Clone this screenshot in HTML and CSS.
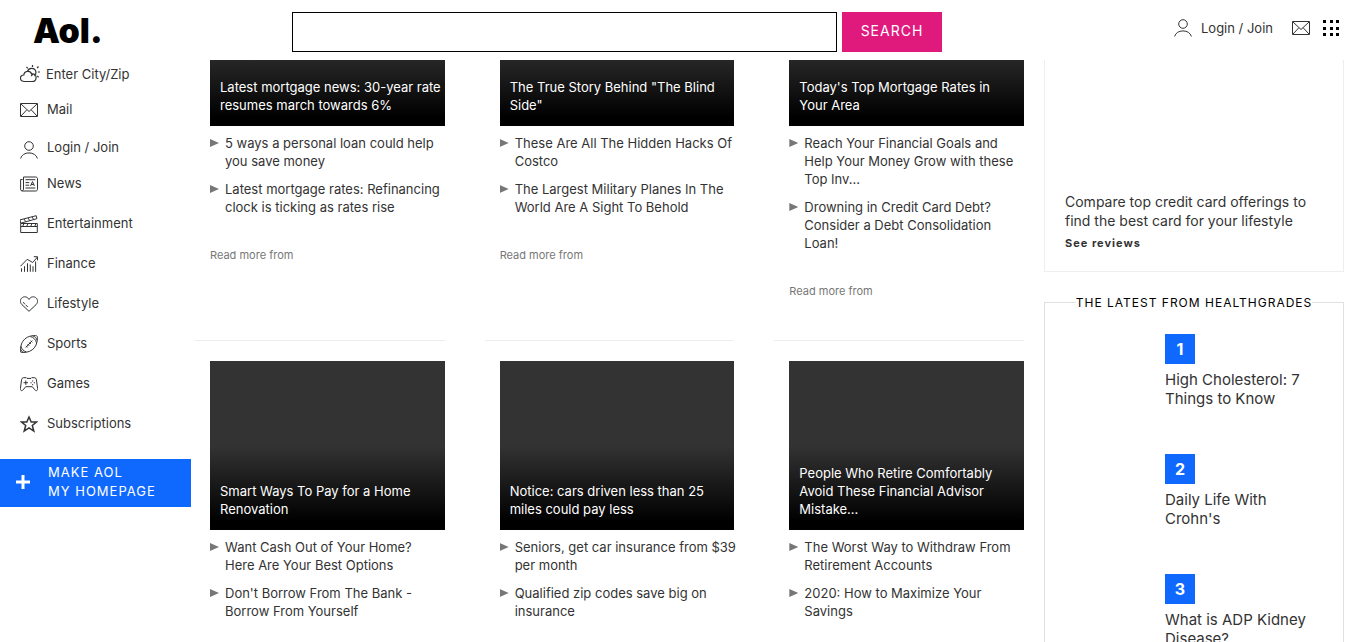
FILE: index.html
```html
<!DOCTYPE html>
<html lang="en">
<head>
<meta charset="utf-8">
<meta name="viewport" content="width=device-width, initial-scale=1">
<title>Aol.</title>
<link rel="stylesheet" href="styles.css">
</head>
<body>
<svg class="sprite" aria-hidden="true">
  <symbol id="mail" viewBox="0 0 18 18"><path d="M.5 2.500h17v13H.500zM1 3l8 7.500L17 3M1 15l5.800-6.200M17 15l-5.800-6.200"/></symbol>
  <symbol id="user" viewBox="0 0 18 18"><circle cx="9" cy="5" r="4.3"/><path d="M.6 17.5c1-3.600 4.300-5.600 8.400-5.600s7.400 2 8.400 5.600"/></symbol>
</svg>
<header class="top">
  <a class="logo" href="#">Aol.</a>
  <form class="search">
    <input class="search-box" type="text" aria-label="Search the web">
    <button class="search-button" type="button">SEARCH</button>
  </form>
  <div class="account">
    <a class="account-login" href="#"><svg class="icon"><use href="#user"/></svg>Login / Join</a>
    <a class="account-mail" href="#" aria-label="Mail"><svg class="icon"><use href="#mail"/></svg></a>
    <button class="apps" type="button" aria-label="More sites"><svg class="icon" viewBox="0 0 18 18"><path class="solid" d="M1 1h3v3H1zM8 1h3v3H8zM14 1h3v3h-3zM1 8h3v3H1zM8 8h3v3H8zM14 8h3v3h-3zM1 14h3v3H1zM8 14h3v3H8zM14 14h3v3h-3z"/></svg></button>
  </div>
</header>
<div class="page">
  <nav class="side">
    <a class="side-link side-weather" href="#"><svg class="icon icon-weather" viewBox="0 0 20 18"><path d="M4.500 16.500c-5.300 0-5.300-6.500-.7-6.500C4.200 5.500 10.500 5 11.600 9c3.200-.3 4.900 1.500 4.400 4.300-.3 2-1.600 3.200-3.700 3.200zM7.500 6.500c1.200-4.200 7.500-4 8.300.2.300 2-.3 3.500-1.500 4.300M12.800 9.200l-1.600 1.900M12.500 0v2M6.500 2l1.300 1.400M18.500 1.500l-1.400 1.500M17.800 7H20M17.300 11l1.300 1.200"/></svg>Enter City/Zip</a>
    <a class="side-link side-mail" href="#"><svg class="icon"><use href="#mail"/></svg>Mail</a>
    <a class="side-link side-login" href="#"><svg class="icon"><use href="#user"/></svg>Login / Join</a>
    <a class="side-link" href="#"><svg class="icon" viewBox="0 0 18 18"><path d="M3.500 2h12c1.200 0 2 .7 2 1.700v10.600c0 1.100-.7 1.700-1.800 1.700H2.500C1.300 16 .6 15.300.6 14V4.500h2M3.500 2v12c0 1.400-1 2-2 1.500M5.500 4.700h9.800M5.500 7.600h3.700M5.500 10.200h3.700M5.500 13h9.800M10.600 10.900l1.900-4.300 1.900 4.300M11.200 9.500h2.500"/></svg>News</a>
    <a class="side-link" href="#"><svg class="icon" viewBox="0 0 18 18"><path d="M.7 8.500h16.600v9H.7zM.7 11.500h16.600M.7 8.200L0 4.900 16.200.7l.7 3zM4 4l1.700 2.700M8 2.900l1.700 2.700M12 1.900l1.700 2.700M4 8.500l-1.400 3M8 8.500l-1.400 3M12 8.500l-1.400 3M16 8.500l-1.400 3"/></svg>Entertainment</a>
    <a class="side-link" href="#"><svg class="icon" viewBox="0 0 18 18"><path d="M.4 11.300l6.800-7 5.500 3.200 4.700-5.400M13.800 1.700h3.700v3.600M1.500 16.800v-3.500M4.500 16.800v-5.600M7.500 16.800V8.300M10.300 16.800V9.500M13 16.800v-5.600M15.600 16.800V6.500"/></svg>Finance</a>
    <a class="side-link" href="#"><svg class="icon" viewBox="0 0 18 18"><path d="M9 16.300L2 9.700C-.6 7.100.3 3.700 2.600 2.400 5 1.100 7.700 2 9 4.500c1.300-2.500 4-3.400 6.400-2.100 2.300 1.300 3.200 4.700.6 7.300zM3.200 7.200l1.600 2M5.600 9.800l2.200 2.200"/></svg>Lifestyle</a>
    <a class="side-link" href="#"><svg class="icon" viewBox="0 0 18 18"><path d="M.8 17.200C-.3 10.500 2.500.4 15.500.6c1.300 0 1.900.5 1.900 1.800C17.700 14.700 8.500 18.500.8 17.200zM10.500 1.600c3 .7 5.100 2.800 5.900 6M13 .9c2 .7 3.400 2.200 4.200 4.300M.9 11.200c.6 2.800 2.700 4.900 5.500 5.700M.5 14c.6 1.700 1.800 2.800 3.200 3.300M5.800 12.500l6.500-7M6 10.800l1.600 1.600M7.600 9.100l1.600 1.600M9.200 7.400l1.600 1.600M10.700 5.700l1.600 1.600"/></svg>Sports</a>
    <a class="side-link" href="#"><svg class="icon" viewBox="0 0 18 18"><path d="M3.300 2.700h3l.7.700h4l.7-.7h3c1 .2 1.500.9 1.700 1.900l1.200 8.900c.1 2.600-1.800 2.500-2.700 1.400l-2.600-3.200H5.700l-2.600 3.200C2.200 16 .3 16.100.4 13.500l1.200-8.900c.2-1 .7-1.700 1.700-1.900zM5.800 5.500v4.400M3.600 7.700H8M12.700 5.400v1.200M12.700 9v1.200M10.500 7.800h1.200M13.800 7.800H15"/></svg>Games</a>
    <a class="side-link" href="#"><svg class="icon icon-star" viewBox="0 0 18 18"><path d="M9 2l2.200 5h5.300l-4.200 3.500 1.500 5.600L9 12.900l-4.800 3.200 1.500-5.600L1.500 7h5.300z"/></svg>Subscriptions</a>
    <a class="homepage" href="#"><svg class="plus" viewBox="0 0 16 16"><path d="M8 1v14M1 8h14"/></svg><span>MAKE AOL<br>MY HOMEPAGE</span></a>
  </nav>

  <main class="stories">
    <article class="card">
      <a class="tile" href="#">Latest mortgage news: 30-year rate resumes march towards 6%</a>
      <ul class="links">
        <li><a href="#">5 ways a personal loan could help you save money</a></li>
        <li><a href="#">Latest mortgage rates: Refinancing clock is ticking as rates rise</a></li>
      </ul>
      <p class="source">Read more from</p>
    </article>
    <article class="card">
      <a class="tile" href="#">The True Story Behind "The Blind Side"</a>
      <ul class="links">
        <li><a href="#">These Are All The Hidden Hacks Of Costco</a></li>
        <li><a href="#">The Largest Military Planes In The World Are A Sight To Behold</a></li>
      </ul>
      <p class="source">Read more from</p>
    </article>
    <article class="card">
      <a class="tile" href="#">Today's Top Mortgage Rates in Your Area</a>
      <ul class="links">
        <li><a href="#">Reach Your Financial Goals and Help Your Money Grow with these Top Inv...</a></li>
        <li><a href="#">Drowning in Credit Card Debt? Consider a Debt Consolidation Loan!</a></li>
      </ul>
      <p class="source">Read more from</p>
    </article>
    <article class="card">
      <a class="tile" href="#">Smart Ways To Pay for a Home Renovation</a>
      <ul class="links">
        <li><a href="#">Want Cash Out of Your Home?<br>Here Are Your Best Options</a></li>
        <li><a href="#">Don't Borrow From The Bank - Borrow From Yourself</a></li>
      </ul>
    </article>
    <article class="card">
      <a class="tile" href="#">Notice: cars driven less than 25 miles could pay less</a>
      <ul class="links">
        <li><a href="#">Seniors, get car insurance from $39 per month</a></li>
        <li><a href="#">Qualified zip codes save big on insurance</a></li>
      </ul>
    </article>
    <article class="card">
      <a class="tile" href="#">People Who Retire Comfortably Avoid These Financial Advisor Mistake...</a>
      <ul class="links">
        <li><a href="#">The Worst Way to Withdraw From Retirement Accounts</a></li>
        <li><a href="#">2020: How to Maximize Your Savings</a></li>
      </ul>
    </article>
  </main>

  <aside class="rail">
    <section class="promo">
      <p class="promo-text">Compare top credit card offerings to find the best card for your lifestyle</p>
      <a class="promo-link" href="#">See reviews</a>
    </section>
    <section class="health">
      <h2 class="health-title"><span>THE LATEST FROM HEALTHGRADES</span></h2>
      <ol class="health-list">
        <li><span class="rank">1</span><a href="#">High Cholesterol: 7 Things to Know</a></li>
        <li><span class="rank">2</span><a href="#">Daily Life With Crohn's</a></li>
        <li><span class="rank">3</span><a href="#">What is ADP Kidney Disease?</a></li>
      </ol>
    </section>
  </aside>
</div>
</body>
</html>
```
FILE: styles.css
```css
* { box-sizing: border-box; }
html { scrollbar-width: none; }
body {
  margin: 0;
  height: 100vh;
  overflow: hidden;
  background: #fff;
  color: #333;
  font-family: Inter, "Liberation Sans", sans-serif;
  font-size: 13px;
  line-height: 18px;
}
a { color: inherit; text-decoration: none; }
ul, ol, p, h2 { margin: 0; padding: 0; }
ul, ol { list-style: none; }
button { border: 0; padding: 0; font: inherit; cursor: pointer; }

.sprite { display: none; }
.icon {
  flex: none;
  width: 18px;
  height: 18px;
  fill: none;
  stroke: #333;
  stroke-width: 1;
}
.icon .solid { fill: #000; stroke: none; }

.top {
  position: relative;
  z-index: 2;
  display: flex;
  align-items: center;
  height: 60px;
  padding: 0 26px 0 33px;
  background: #fff;
}
.logo {
  flex: 0 0 259px;
  color: #000;
  font-size: 34px;
  font-weight: 900;
  line-height: 60px;
  padding-top: 2px;
}
.search { display: flex; flex: 0 1 650px; gap: 5px; padding-top: 4px; }
.search-box {
  flex: 1;
  min-width: 0;
  height: 40px;
  padding: 0 10px;
  border: 1px solid #000;
  border-radius: 0;
  font: inherit;
}
.search-button {
  width: 100px;
  padding-bottom: 2px;
  background: #e0197d;
  color: #fff;
  font-size: 14px;
  letter-spacing: 1px;
}
.account { display: flex; align-items: center; margin-left: auto; padding-bottom: 4px; }
.account-login { display: flex; align-items: center; gap: 9px; margin-right: 19px; }
.account-mail { display: flex; margin-right: 12px; }
.apps { display: flex; background: none; }

.page {
  display: grid;
  grid-template-columns: 191px minmax(0, 1fr) 300px;
  align-items: start;
  padding-right: 22px;
}

.side-link {
  display: flex;
  align-items: center;
  gap: 9px;
  height: 40px;
  padding-left: 20px;
}
.side-link .icon { margin-top: 2px; }
.side-weather { height: 28px; gap: 6px; }
.side-weather .icon { width: 20px; margin-top: 0; stroke-width: 1.2; }
.side-mail { height: 42px; }
.side-login { height: 33px; }
.side-login .icon { margin-top: 6px; }
.side-link .icon-star { stroke-width: 1.5; }
.homepage {
  display: flex;
  align-items: center;
  gap: 17px;
  height: 48px;
  margin-top: 16px;
  padding: 0 0 2px 15px;
  background: #0f69ff;
  color: #fff;
  line-height: 19px;
  letter-spacing: 1px;
}
.plus { width: 16px; height: 16px; fill: none; stroke: #fff; stroke-width: 3; }

/* The first row slides up behind the header. */
.stories {
  display: grid;
  grid-template-columns: repeat(3, minmax(0, 1fr));
  gap: 20px 40px;
  margin-top: -103px;
  padding: 0 20px 0 4px;
}
.card {
  padding: 0 0 40px 15px;
  border-bottom: 1px solid #eee;
}
.tile {
  display: flex;
  align-items: flex-end;
  height: 169px;
  padding: 0 4px 12px 10px;
  background: linear-gradient(#333 50%, #000 95%);
  color: #fff;
}
.links { display: grid; gap: 10px; padding-top: 8px; margin-right: -4px; }
.links li { display: flex; gap: 6px; }
.links li::before {
  content: "";
  flex: none;
  margin-top: 5px;
  width: 9px;
  height: 8px;
  background: #777;
  clip-path: polygon(0 0, 100% 50%, 0 100%);
}
.source { margin-top: 30px; color: #777; font-size: 11px; }

.promo {
  padding: 132px 20px 19px;
  border: 1px solid #eee;
  border-top: 0;
}
.promo-text { font-size: 14px; line-height: 19px; }
.promo-link { display: block; margin-top: 4px; font-size: 11px; font-weight: 700; letter-spacing: 1px; }

.health {
  position: relative;
  margin-top: 30px;
  padding: 31px 20px 20px 120px;
  border: 1px solid #e0e0e0;
}
.health-title {
  position: absolute;
  top: -9px;
  left: 0;
  right: 0;
  color: #000;
  font-size: 12px;
  font-weight: 400;
  line-height: 18px;
  letter-spacing: 1px;
  text-align: center;
}
.health-title span { background: #fff; }
.health-list li { min-height: 120px; font-size: 15px; line-height: 19px; }
.rank {
  display: block;
  width: 30px;
  margin-bottom: 6px;
  background: #0f69ff;
  color: #fff;
  font-size: 16px;
  font-weight: 700;
  line-height: 30px;
  text-align: center;
}
.health-list a { display: block; }
```
